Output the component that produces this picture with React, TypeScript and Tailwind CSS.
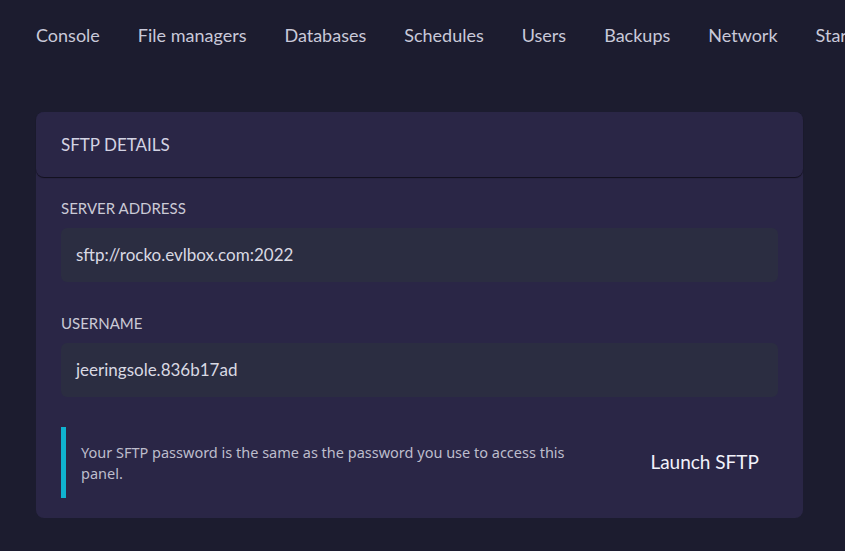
import React from "react";

const tabs = ["Console", "File managers", "Databases", "Schedules", "Users", "Backups", "Network", "Startup"];

export default function App() {
  return (
    <div className="w-[845px] h-[551px] overflow-hidden bg-[#1c1c2f]" style={{ fontFamily: "Lato, 'Noto Sans', sans-serif" }}>
      <nav className="h-[71px] flex items-center gap-[38px] pl-[36px] whitespace-nowrap text-[18px] text-[#c9c9d9]">
        {tabs.map((t) => (
          <span key={t}>{t}</span>
        ))}
      </nav>
      <div className="mt-[41px] ml-[36px] w-[767px] rounded-[8px] bg-[#2a2646]">
        <div className="h-[65px] flex items-center px-[25px] rounded-[8px] bg-[#2a2646] shadow-[0_1px_1px_rgba(0,0,0,0.6)] text-[17px] text-[#d3d3e3]">
          SFTP DETAILS
        </div>
        <div className="px-[25px] pt-[21px] pb-[20px]">
          <div className="text-[15px] leading-[20px] text-[#cacad6]">SERVER ADDRESS</div>
          <div className="mt-[10px] h-[54px] rounded-[6px] bg-[#2b2d41] flex items-center px-[15px] text-[17px] text-[#d9d9e3]">
            sftp://rocko.evlbox.com:2022
          </div>
          <div className="mt-[31px] text-[15px] leading-[20px] text-[#cacad6]">USERNAME</div>
          <div className="mt-[10px] h-[54px] rounded-[6px] bg-[#2b2d41] flex items-center px-[15px] text-[17px] text-[#d9d9e3]">
            jeeringsole.836b17ad
          </div>
          <div className="mt-[30px] flex items-center">
            <div className="flex items-stretch h-[71px] flex-1">
              <div className="w-[5px] bg-[#0fb2cf]" />
              <div
                className="flex items-center pl-[15px] w-[525px] text-[14.5px] leading-[21px] text-[#bdbdcc]"
                style={{ fontFamily: "'Noto Sans', sans-serif" }}
              >
                Your SFTP password is the same as the password you use to access this panel.
              </div>
            </div>
            <button className="px-[19px] text-[19px] text-[#f2f2fb]">Launch SFTP</button>
          </div>
        </div>
      </div>
    </div>
  );
}
